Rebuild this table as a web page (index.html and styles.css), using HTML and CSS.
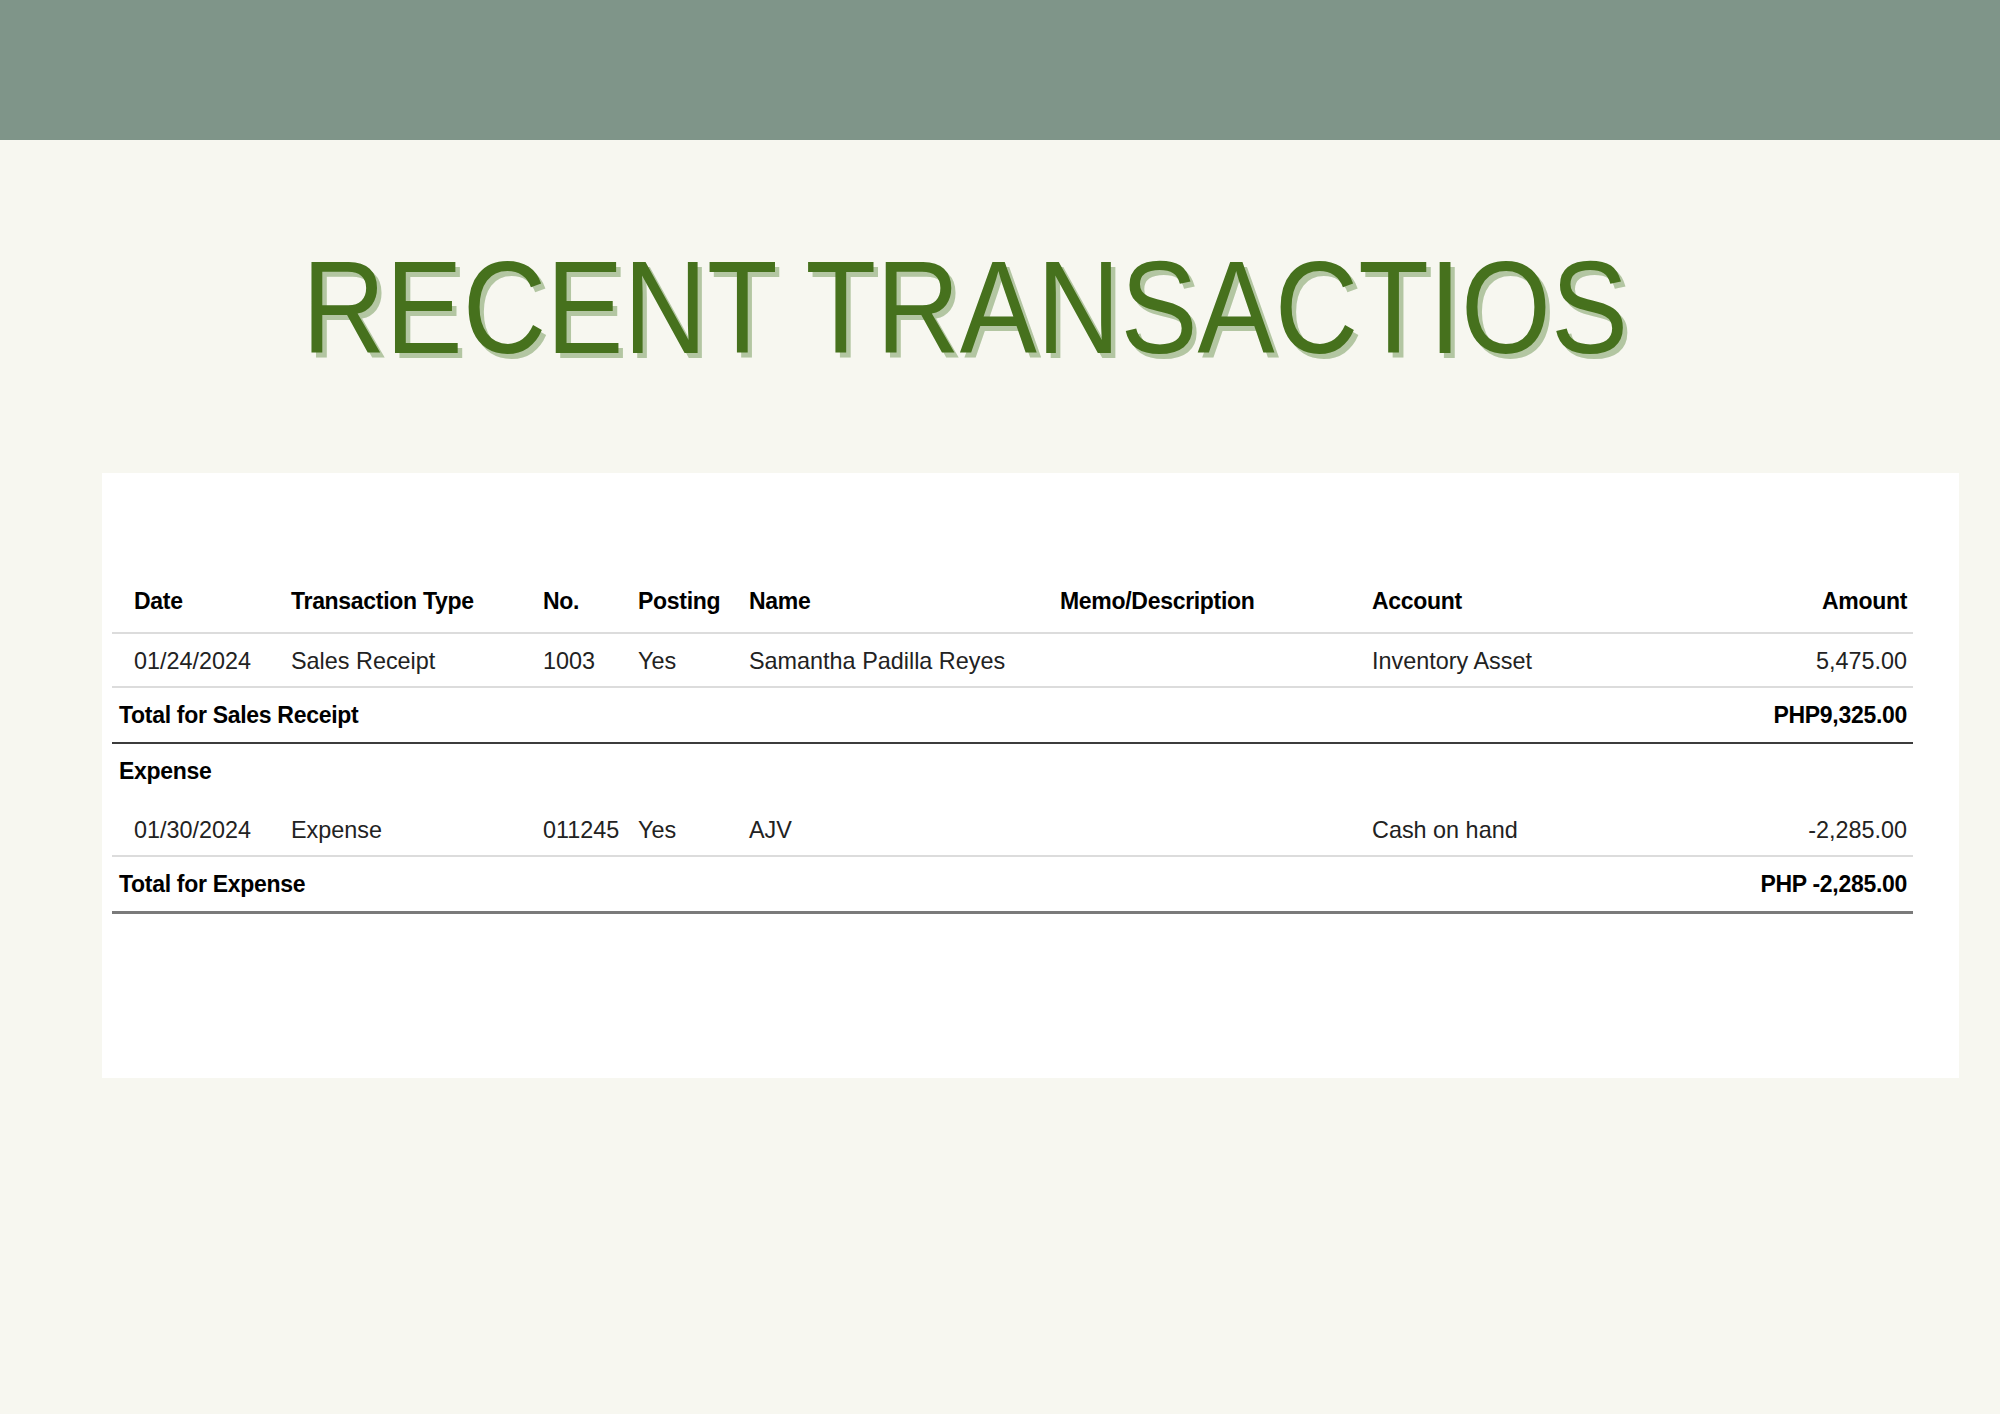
FILE: index.html
```html
<!DOCTYPE html>
<html lang="en">
<head>
<meta charset="utf-8">
<title>Recent Transactions</title>
<link rel="stylesheet" href="styles.css">
</head>
<body>
<header class="topbar"></header>
<main class="page">
  <h1 class="title"><span class="title-text">RECENT TRANSACTIOS</span></h1>
  <section class="card">
    <div class="report">
      <div class="row head">
        <div class="c c-date">Date</div>
        <div class="c">Transaction Type</div>
        <div class="c">No.</div>
        <div class="c">Posting</div>
        <div class="c">Name</div>
        <div class="c">Memo/Description</div>
        <div class="c">Account</div>
        <div class="c c-amt">Amount</div>
      </div>
      <div class="row data">
        <div class="c c-date">01/24/2024</div>
        <div class="c">Sales Receipt</div>
        <div class="c">1003</div>
        <div class="c">Yes</div>
        <div class="c">Samantha Padilla Reyes</div>
        <div class="c"></div>
        <div class="c">Inventory Asset</div>
        <div class="c c-amt">5,475.00</div>
      </div>
      <div class="total total-dark">
        <span>Total for Sales Receipt</span>
        <span>PHP9,325.00</span>
      </div>
      <div class="group">Expense</div>
      <div class="row data">
        <div class="c c-date">01/30/2024</div>
        <div class="c">Expense</div>
        <div class="c">011245</div>
        <div class="c">Yes</div>
        <div class="c">AJV</div>
        <div class="c"></div>
        <div class="c">Cash on hand</div>
        <div class="c c-amt">-2,285.00</div>
      </div>
      <div class="total total-grey">
        <span>Total for Expense</span>
        <span>PHP -2,285.00</span>
      </div>
    </div>
  </section>
</main>
</body>
</html>
```

FILE: styles.css
```css
html, body {
  margin: 0;
  padding: 0;
}
body {
  background: #f7f7f0;
  width: 2000px;
  height: 1414px;
  overflow: hidden;
  font-family: "Liberation Sans", Arial, sans-serif;
}
.topbar {
  height: 140px;
  background: #7f9589;
}
.page {
  display: flex;
  flex-direction: column;
}
.title {
  margin: 102px 0 0 302px;
  font-size: 131px;
  line-height: 131px;
  font-weight: 400;
  color: #46711d;
  white-space: nowrap;
  text-shadow: 5px 5px 0 #b3c6a2;
}
.title-text {
  display: inline-block;
  transform: scaleX(0.883);
  transform-origin: left center;
}
.card {
  margin: 100px 0 0 102px;
  width: 1857px;
  height: 605px;
  box-sizing: border-box;
  background: #ffffff;
  padding: 98px 46px 0 10px;
}
.report {
  display: flex;
  flex-direction: column;
}
.row {
  display: grid;
  grid-template-columns: 179px 252px 95px 111px 311px 312px 1fr 200px;
  align-items: center;
  border-bottom: 2px solid #dcdcdc;
}
.row.head {
  height: 61px;
  font-weight: 700;
  font-size: 23px;
  letter-spacing: -0.3px;
  color: #000;
}
.row.data {
  height: 54px;
  padding-top: 3px;
  box-sizing: border-box;
  font-size: 23.4px;
  color: #222;
}
.c {
  white-space: nowrap;
}
.c-date {
  padding-left: 22px;
}
.c-amt {
  text-align: right;
  padding-right: 6px;
}
.total {
  display: flex;
  justify-content: space-between;
  align-items: center;
  height: 54px;
  padding: 0 6px 0 7px;
  font-weight: 700;
  font-size: 23px;
  letter-spacing: -0.3px;
  color: #000;
}
.total-dark {
  border-bottom: 2px solid #3c3c3c;
}
.total-grey {
  border-bottom: 3px solid #7a7a7a;
}
.group {
  height: 59px;
  display: flex;
  align-items: flex-start;
  padding-top: 14px;
  box-sizing: border-box;
  padding-left: 7px;
  font-weight: 700;
  font-size: 23px;
  letter-spacing: -0.3px;
  color: #000;
}
```
